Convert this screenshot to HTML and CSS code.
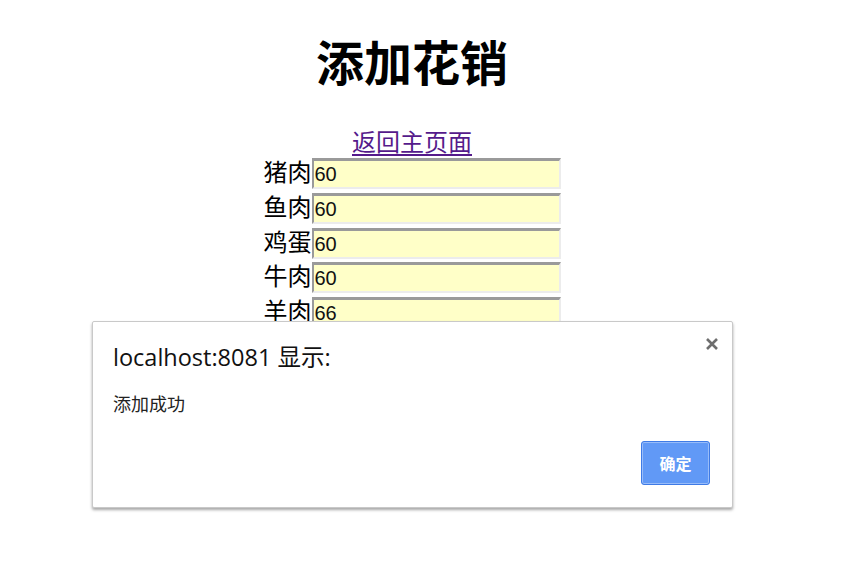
FILE: index.html
```html
<!DOCTYPE html>
<html lang="zh-CN">
<head>
<meta charset="utf-8">
<title>添加花销</title>
<link rel="stylesheet" href="styles.css">
</head>
<body>
<div class="page">
  <h1 class="title">添加花销</h1>
  <a class="back" href="#">返回主页面</a>
  <form class="form">
    <div class="row"><label class="lbl">猪肉</label><input class="field" type="text" value="60"></div>
    <div class="row"><label class="lbl">鱼肉</label><input class="field" type="text" value="60"></div>
    <div class="row"><label class="lbl">鸡蛋</label><input class="field" type="text" value="60"></div>
    <div class="row"><label class="lbl">牛肉</label><input class="field" type="text" value="60"></div>
    <div class="row"><label class="lbl">羊肉</label><input class="field" type="text" value="66"></div>
  </form>
</div>
<div class="dialog">
  <div class="dlg-head">
    <div class="dlg-title">localhost:8081 显示:</div>
    <svg class="dlg-close" width="14" height="14" viewBox="0 0 14 14"><path d="M2 2 L12 12 M12 2 L2 12" stroke="#6e6e6e" stroke-width="2.6" stroke-linecap="butt"/></svg>
  </div>
  <div class="dlg-msg">添加成功</div>
  <div class="dlg-foot"><button class="dlg-ok" type="button">确定</button></div>
</div>
</body>
</html>
```
FILE: styles.css
```css
html, body {
  margin: 0;
  padding: 0;
  background: #ffffff;
}
body {
  font-family: "Noto Sans CJK SC", "Noto Sans", sans-serif;
  color: #000;
}
.page {
  width: 808px;
  margin-left: 8px;
  padding-top: 31px;
  text-align: center;
}
.title {
  margin: 0;
  font-size: 48px;
  line-height: 58px;
  font-weight: 700;
}
.back {
  display: inline-block;
  margin-top: 37px;
  font-size: 24px;
  line-height: 30px;
  color: #551a8b;
  text-decoration: underline;
  text-underline-offset: 3px;
}
.form {
  display: flex;
  flex-direction: column;
  align-items: center;
  gap: 3.75px;
  margin: 2px 0 0 0;
}
.row {
  display: flex;
  align-items: flex-start;
  height: 31px;
}
.lbl {
  font-size: 24px;
  line-height: 26px;
  width: 48px;
  text-align: right;
}
.field {
  box-sizing: border-box;
  width: 249px;
  height: 31px;
  margin: 0;
  padding: 1px 1px 0 1px;
  border-style: solid;
  border-width: 3px 2px 2px 2px;
  border-color: #9a9a9a #ececec #ececec #9a9a9a;
  background: #ffffc8;
  font-family: "Liberation Sans", Arial, sans-serif;
  font-size: 20px;
  color: #111;
  outline: none;
}
.dialog {
  position: absolute;
  left: 92px;
  top: 321px;
  width: 641px;
  height: 187px;
  box-sizing: border-box;
  background: #fff;
  border: 1px solid #c9c9c9;
  border-radius: 2px;
  box-shadow: 0 2px 3px rgba(0, 0, 0, 0.35);
  padding: 14px 22px 22px 20px;
  display: flex;
  flex-direction: column;
  font-family: "Open Sans", "Noto Sans CJK SC", sans-serif;
}
.dlg-head {
  display: flex;
  justify-content: space-between;
  align-items: flex-start;
}
.dlg-title {
  margin-top: 6px;
  font-size: 23.5px;
  line-height: 30px;
  color: #111;
}
.dlg-close {
  margin-top: 1px;
  margin-right: -9px;
}
.dlg-msg {
  margin-top: 19px;
  font-family: "Noto Sans CJK SC", sans-serif;
  font-size: 18px;
  line-height: 24px;
  color: #222;
}
.dlg-foot {
  margin-top: auto;
  display: flex;
  justify-content: flex-end;
}
.dlg-ok {
  width: 69px;
  height: 44px;
  box-sizing: border-box;
  background: #6199f6;
  border: 1px solid #3f7be6;
  border-radius: 3px;
  box-shadow: inset 0 0 0 1px rgba(255, 255, 255, 0.35);
  color: #fff;
  font-family: "Noto Sans CJK SC", sans-serif;
  font-weight: 700;
  font-size: 16px;
  padding: 0;
}
```
